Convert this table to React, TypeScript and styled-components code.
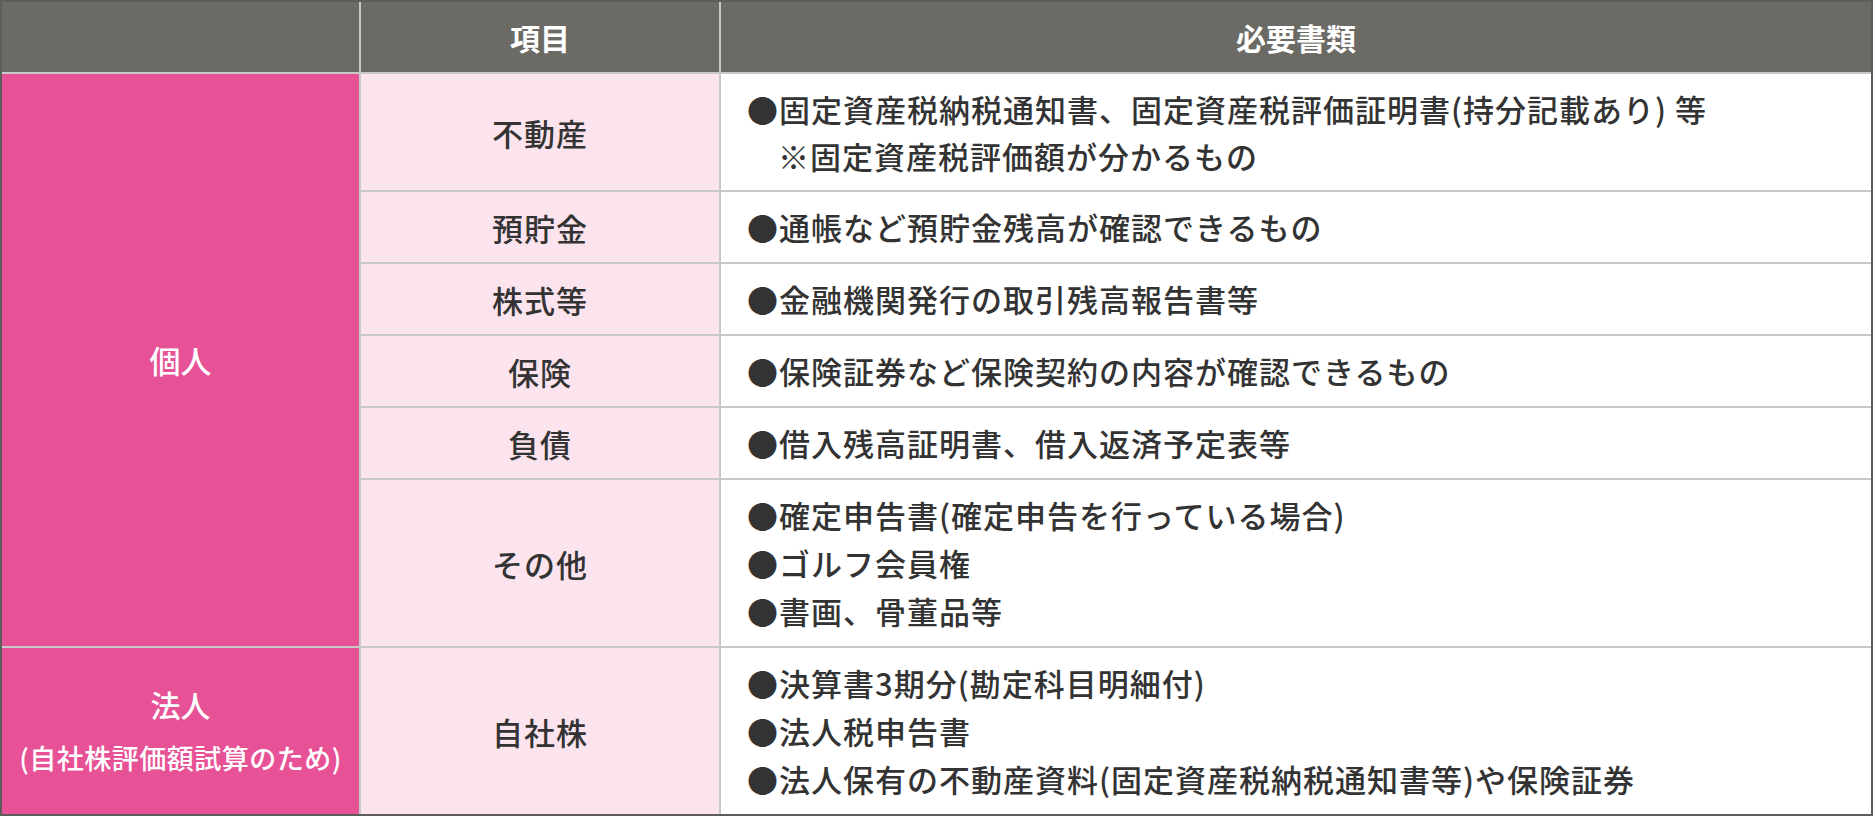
import React from 'react';
import styled, { createGlobalStyle } from 'styled-components';

const GlobalStyle = createGlobalStyle`
  html, body {
    margin: 0;
    padding: 0;
    background: #fff;
  }
  body {
    font-family: "Noto Sans CJK JP", "Noto Sans", sans-serif;
    color: #333;
  }
`;

const Table = styled.div`
  display: grid;
  grid-template-columns: 357px 358px 1fr;
  gap: 2px;
  width: 1873px;
  box-sizing: border-box;
  background: #c8c8c8;
  border: 2px solid #5f5d5a;
`;

const HeadCell = styled.div`
  background: #6c6a65;
  color: #fff;
  font-size: 30px;
  font-weight: 700;
  line-height: 48px;
  padding: 11px 0;
  text-align: center;
`;

const GroupCell = styled.div<{ $span: number }>`
  grid-row: span ${(p) => p.$span};
  background: #e75297;
  color: #fff;
  display: flex;
  flex-direction: column;
  align-items: center;
  justify-content: center;
  text-align: center;
`;

const GroupTitle = styled.div<{ $size?: number }>`
  font-size: ${(p) => p.$size || 31}px;
  font-weight: 500;
  line-height: 54px;
`;

const GroupSub = styled.div`
  font-size: 27px;
  font-weight: 500;
  line-height: 54px;
  letter-spacing: 0.5px;
`;

const ItemCell = styled.div`
  background: #fbe4ee;
  display: flex;
  align-items: center;
  justify-content: center;
  font-size: 31px;
  font-weight: 500;
  letter-spacing: 1px;
`;

const DocCell = styled.div`
  background: #fff;
  padding: 11px 26px;
  font-size: 31px;
  font-weight: 500;
  letter-spacing: 1px;
`;

const Line = styled.div`
  line-height: 48px;
  white-space: nowrap;
`;

const Note = styled(Line)`
  line-height: 46px;
  padding-left: 1em;
`;

type Row = { item: string; docs: string[]; note?: string };

const personal: Row[] = [
  {
    item: '不動産',
    docs: ['●固定資産税納税通知書、固定資産税評価証明書(持分記載あり) 等'],
    note: '※固定資産税評価額が分かるもの',
  },
  { item: '預貯金', docs: ['●通帳など預貯金残高が確認できるもの'] },
  { item: '株式等', docs: ['●金融機関発行の取引残高報告書等'] },
  { item: '保険', docs: ['●保険証券など保険契約の内容が確認できるもの'] },
  { item: '負債', docs: ['●借入残高証明書、借入返済予定表等'] },
  {
    item: 'その他',
    docs: ['●確定申告書(確定申告を行っている場合)', '●ゴルフ会員権', '●書画、骨董品等'],
  },
];

const corporate: Row[] = [
  {
    item: '自社株',
    docs: [
      '●決算書3期分(勘定科目明細付)',
      '●法人税申告書',
      '●法人保有の不動産資料(固定資産税納税通知書等)や保険証券',
    ],
  },
];

const renderRow = (row: Row) => (
  <React.Fragment key={row.item}>
    <ItemCell>{row.item}</ItemCell>
    <DocCell>
      {row.docs.map((d) => (
        <Line key={d}>{d}</Line>
      ))}
      {row.note && <Note>{row.note}</Note>}
    </DocCell>
  </React.Fragment>
);

const App = () => {
  return (
    <>
      <GlobalStyle />
      <Table>
        <HeadCell />
        <HeadCell>項目</HeadCell>
        <HeadCell>必要書類</HeadCell>

        <GroupCell $span={personal.length}>
          <GroupTitle>個人</GroupTitle>
        </GroupCell>
        {personal.map(renderRow)}

        <GroupCell $span={corporate.length}>
          <GroupTitle $size={30}>法人</GroupTitle>
          <GroupSub>(自社株評価額試算のため)</GroupSub>
        </GroupCell>
        {corporate.map(renderRow)}
      </Table>
    </>
  );
};

export default App;
